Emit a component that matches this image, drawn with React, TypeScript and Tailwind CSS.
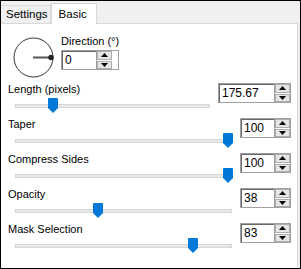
import React from "react";

const Arrow = ({ up }: { up?: boolean }) => (
  <svg width="7" height="4" viewBox="0 0 7 4">
    {up ? <path d="M0 4 L3.5 0 L7 4 Z" fill="#000" /> : <path d="M0 0 L7 0 L3.5 4 Z" fill="#000" />}
  </svg>
);

const SpinBox = ({ value, w }: { value: string; w: string }) => (
  <div className="flex h-[20px] border border-[#a0a0a0] bg-white">
    <div className={`${w} h-full border-t border-l border-[#696969] px-[2px] leading-[17px] text-[12px]`}>{value}</div>
    <div className="flex w-[16px] flex-col gap-px border-l border-[#a0a0a0] bg-white">
      <div className="flex h-[9px] items-center justify-center border border-[#adadad] bg-[#e5e5e5]">
        <Arrow up />
      </div>
      <div className="flex h-[9px] items-center justify-center border border-[#adadad] bg-[#e5e5e5]">
        <Arrow />
      </div>
    </div>
  </div>
);

const Thumb = () => (
  <svg width="10" height="15" viewBox="0 0 10 15">
    <path d="M1 0 H9 Q10 0 10 1 V10 L5 15 L0 10 V1 Q0 0 1 0 Z" fill="#0078d7" />
  </svg>
);

const SliderRow = ({
  label,
  value,
  pos,
  w,
}: {
  label: string;
  value: string;
  pos: number;
  w: string;
}) => (
  <div className="flex h-[35px] items-start pl-[7px] pr-[6px]">
    <div className="flex-1">
      <div className="mt-[1px] h-[13px] leading-[13px]">{label}</div>
      <div className="relative ml-[7px] mr-[8px] h-[16px]">
        <div className="absolute left-0 right-0 top-[8px] h-[4px] border border-[#d6d6d6] bg-[#e7eaea]" />
        <div className="absolute top-[2px]" style={{ left: pos }}>
          <Thumb />
        </div>
      </div>
    </div>
    <div className="mt-[1px]">
      <SpinBox value={value} w={w} />
    </div>
  </div>
);

export default function App() {
  return (
    <div className="flex h-[269px] w-[301px] flex-col overflow-hidden border border-black bg-[#f0f0f0] font-['Liberation_Sans',Arial,sans-serif] text-[11px] text-black">
      <div className="flex h-[22px] items-end">
        <div className="flex h-[18px] items-center border-r border-t border-[#d9d9d9] pl-[5px] pr-[2px] text-[11.5px]">
          Settings
        </div>
        <div className="relative z-10 -mb-px flex h-[21px] items-start border-l border-r border-t border-[#d9d9d9] bg-white pl-[7px] pr-[9px] pt-[2px] text-[11.5px]">
          Basic
        </div>
      </div>
      <div className="mr-[2px] flex flex-1 flex-col border-r border-t border-[#d9d9d9] bg-white">
        <div className="flex h-[58px] pl-[12px] pt-[13px]">
          <svg width="41" height="41" viewBox="0 0 41 41">
            <circle cx="20.5" cy="20.5" r="19.5" fill="none" stroke="#333" strokeWidth="1" />
            <line x1="20" y1="20.5" x2="38" y2="20.5" stroke="#555" strokeWidth="2" />
            <circle cx="38" cy="20.5" r="2.7" fill="#222" />
          </svg>
          <div className="-mt-[2px] ml-[7px] flex flex-col">
            <div className="h-[13px] leading-[13px]">Direction (°)</div>
            <div className="mt-[2px]">
              <SpinBox value="0" w="w-[34px]" />
            </div>
          </div>
        </div>
        <SliderRow label="Length (pixels)" value="175.67" pos={33} w="w-[55px]" />
        <SliderRow label="Taper" value="100" pos={208} w="w-[33px]" />
        <SliderRow label="Compress Sides" value="100" pos={208} w="w-[33px]" />
        <SliderRow label="Opacity" value="38" pos={78} w="w-[33px]" />
        <SliderRow label="Mask Selection" value="83" pos={173} w="w-[33px]" />
      </div>
    </div>
  );
}
